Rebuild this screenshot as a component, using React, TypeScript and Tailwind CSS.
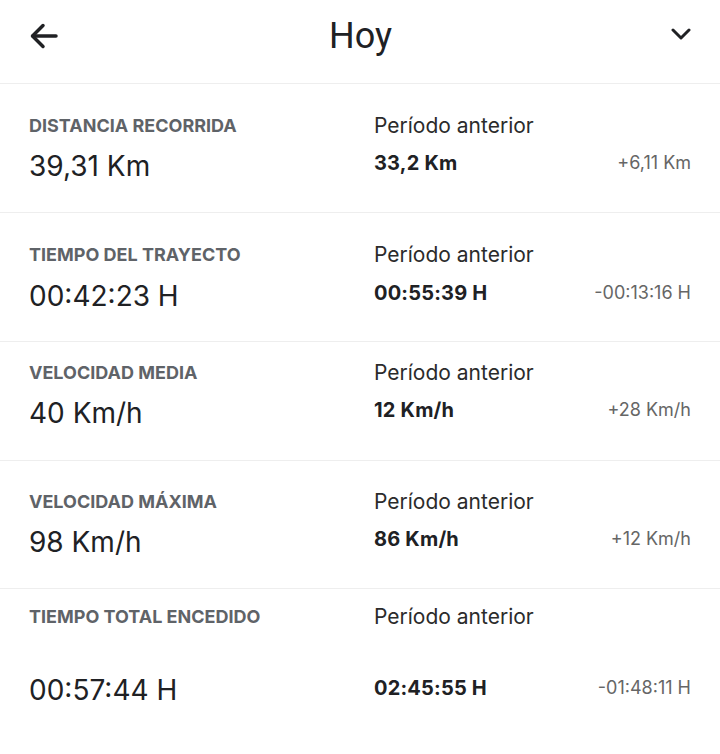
import React from 'react';

type Stat = {
    label: string;
    value: string;
    previous: string;
    diff: string;
    rowClass: string;
    valueClass: string;
    prevClass: string;
};

const stats: Stat[] = [
    {
        label: 'Distancia recorrida',
        value: '39,31 Km',
        previous: '33,2 Km',
        diff: '+6,11 Km',
        rowClass: 'pt-[31px] pb-[29px]',
        valueClass: 'mt-[12px]',
        prevClass: 'mt-[13px]'
    },
    {
        label: 'Tiempo del trayecto',
        value: '00:42:23 H',
        previous: '00:55:39 H',
        diff: '-00:13:16 H',
        rowClass: 'pt-[31px] pb-[28px]',
        valueClass: 'mt-[13px]',
        prevClass: 'mt-[14px]'
    },
    {
        label: 'Velocidad media',
        value: '40 Km/h',
        previous: '12 Km/h',
        diff: '+28 Km/h',
        rowClass: 'pt-[20px] pb-[30px]',
        valueClass: 'mt-[12px]',
        prevClass: 'mt-[13px]'
    },
    {
        label: 'Velocidad máxima',
        value: '98 Km/h',
        previous: '86 Km/h',
        diff: '+12 Km/h',
        rowClass: 'pt-[30px] pb-[29px]',
        valueClass: 'mt-[12px]',
        prevClass: 'mt-[13px]'
    },
    {
        label: 'Tiempo total encedido',
        value: '00:57:44 H',
        previous: '02:45:55 H',
        diff: '-01:48:11 H',
        rowClass: 'pt-[17px] pb-[47px]',
        valueClass: 'mt-[45px]',
        prevClass: 'mt-[47px]'
    }
];

const StatRow: React.FC<{ stat: Stat }> = ({ stat }) => (
    <div className={`flex border-t border-[#eeeeee] pl-[29px] pr-[29px] ${stat.rowClass}`}>
        <div className="flex w-[345px] flex-col">
            <div className="text-[18px] font-bold uppercase leading-[22px] text-[#5f6368]">
                {stat.label}
            </div>
            <div className={`text-[28px] leading-[34px] text-[#202124] ${stat.valueClass}`}>{stat.value}</div>
        </div>
        <div className="flex flex-1 flex-col">
            <div className="text-[21px] leading-[22px] text-[#2b2b2b]">Período anterior</div>
            <div className={`flex items-center justify-between ${stat.prevClass}`}>
                <span className="text-[20px] font-bold leading-[26px] tracking-[0.01em] text-[#202124]">{stat.previous}</span>
                <span className="text-[18px] leading-[26px] text-[#666666]">{stat.diff}</span>
            </div>
        </div>
    </div>
);

const App: React.FC = () => (
    <div className="min-h-[754px] w-[720px] bg-white font-['Inter',sans-serif]">
        <header className="flex h-[83px] items-start justify-between pl-[30px] pr-[29px] pt-[14px]">
            <div className="flex h-[44px] w-[28px] items-center">
                <svg width="28" height="26" viewBox="0 0 28 26" fill="none" stroke="#202124" strokeWidth="3.5" strokeLinecap="round" strokeLinejoin="round">
                    <path d="M26 13H3" />
                    <path d="M13 2.5L2.5 13L13 23.5" />
                </svg>
            </div>
            <h1 className="font-['Roboto',sans-serif] text-[36px] leading-[44px] text-[#202124]">Hoy</h1>
            <div className="flex h-[40px] w-[28px] items-center justify-end">
                <svg width="20" height="12" viewBox="0 0 20 12" fill="none" stroke="#202124" strokeWidth="3" strokeLinecap="round" strokeLinejoin="round">
                    <path d="M2 2L10 10L18 2" />
                </svg>
            </div>
        </header>
        {stats.map((stat) => (
            <StatRow key={stat.label} stat={stat} />
        ))}
    </div>
);

export default App;
